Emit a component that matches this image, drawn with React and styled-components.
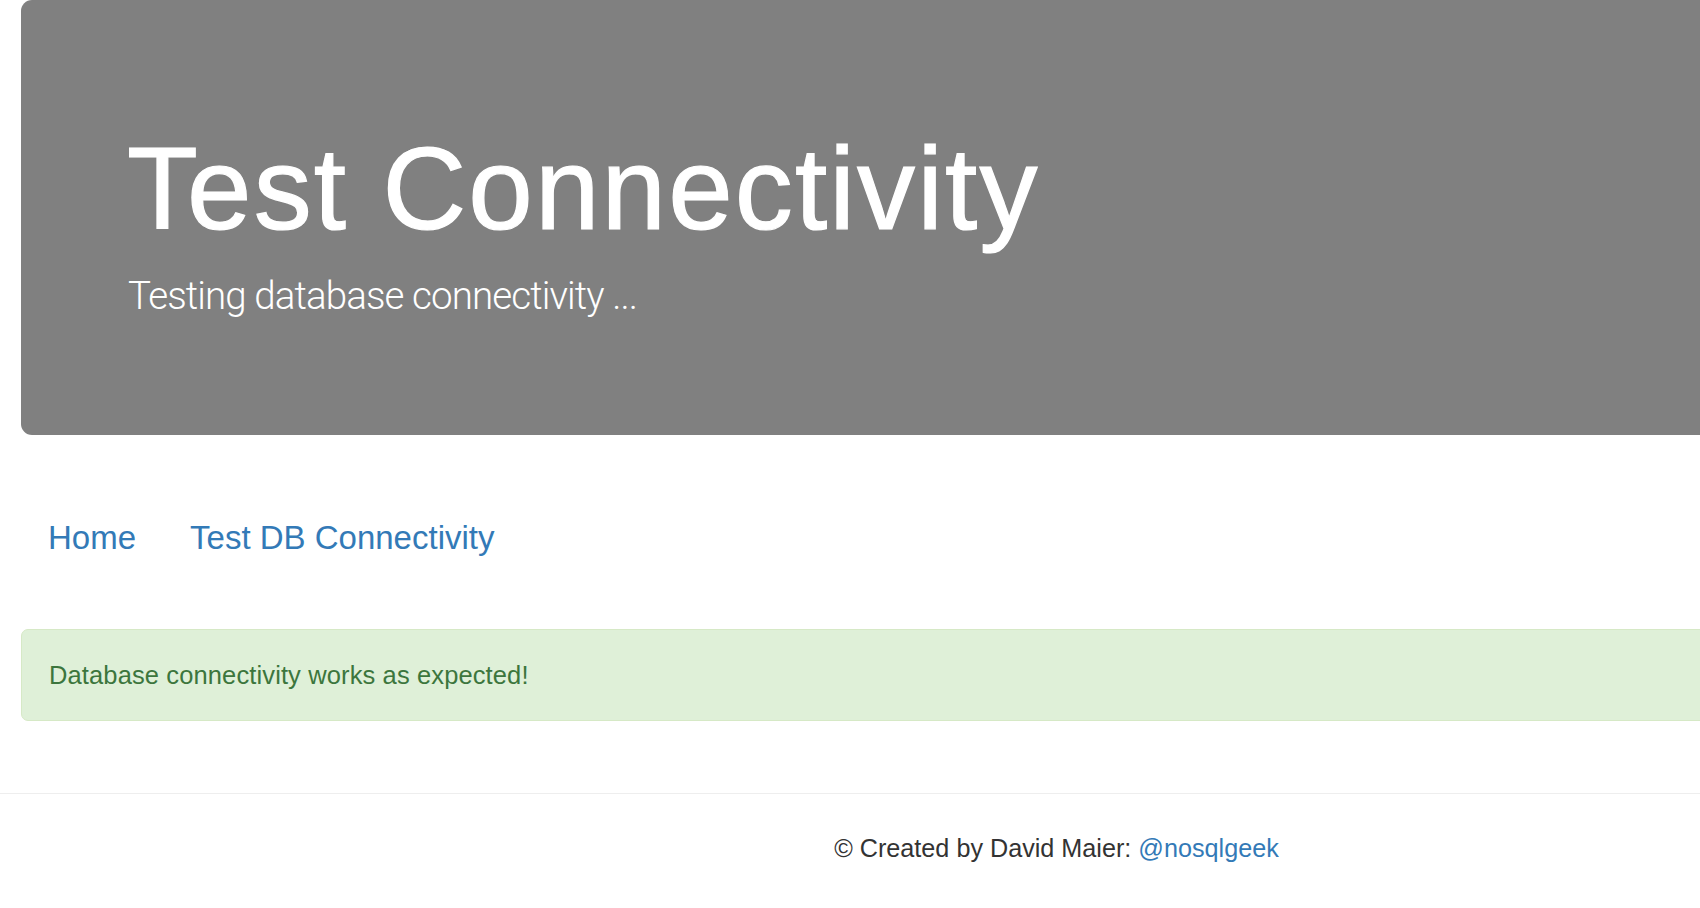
import React from "react";
import styled, { createGlobalStyle } from "styled-components";

const Global = createGlobalStyle`
  html, body { margin: 0; padding: 0; background: #fff; }
  body {
    font-family: "Liberation Sans", Arial, sans-serif;
    color: #333;
    overflow-x: hidden;
  }
`;

const Page = styled.div`
  display: flex;
  flex-direction: column;
`;

const Container = styled.div`
  padding-left: 21px;
  margin-right: -30px;
`;

const Jumbotron = styled.header`
  background: #808080;
  color: #fff;
  border-radius: 11px;
  padding: 126px 0 113px 106px;
  display: flex;
  flex-direction: column;
`;

const Title = styled.h1`
  margin: 0;
  font-family: "Liberation Sans", Arial, sans-serif;
  font-weight: 400;
  font-size: 116px;
  line-height: 1.1;
  letter-spacing: 2.1px;
  -webkit-text-stroke: 1.2px #fff;
`;

const Lead = styled.p`
  margin: 15px 0 0 1px;
  font-family: Roboto, "Liberation Sans", sans-serif;
  font-weight: 300;
  font-size: 38.5px;
  line-height: 1.4;
  letter-spacing: -0.9px;
`;

const Nav = styled.nav`
  display: flex;
  margin-top: 61px;
`;

const NavLink = styled.a`
  display: block;
  padding: 18px 27px;
  font-size: 33px;
  line-height: 1.42857;
  color: #337ab7;
  text-decoration: none;
`;

const Alert = styled.div`
  margin-top: 49px;
  background: #dff0d8;
  border: 1px solid #d6e9c6;
  border-radius: 7px;
  color: #3c763d;
  padding: 28px 27px 27px 27px;
  font-size: 25.5px;
  line-height: 1.4;
  letter-spacing: 0.12px;
`;

const Footer = styled.footer`
  margin-top: 72px;
  border-top: 1px solid #eee;
  padding: 37px 0 40px 413px;
  display: flex;
  justify-content: center;
  font-size: 25.2px;
  line-height: 1.4;
  color: #333;
`;

const FooterLink = styled.a`
  color: #337ab7;
  text-decoration: none;
`;

export default function App() {
  return (
    <Page>
      <Global />
      <Container>
        <Jumbotron>
          <Title>Test Connectivity</Title>
          <Lead>Testing database connectivity ...</Lead>
        </Jumbotron>
        <Nav>
          <NavLink href="#">Home</NavLink>
          <NavLink href="#">Test DB Connectivity</NavLink>
        </Nav>
        <Alert>Database connectivity works as expected!</Alert>
      </Container>
      <Footer>
        <span>
          © Created by David Maier:{" "}
          <FooterLink href="#">@nosqlgeek</FooterLink>
        </span>
      </Footer>
    </Page>
  );
}
